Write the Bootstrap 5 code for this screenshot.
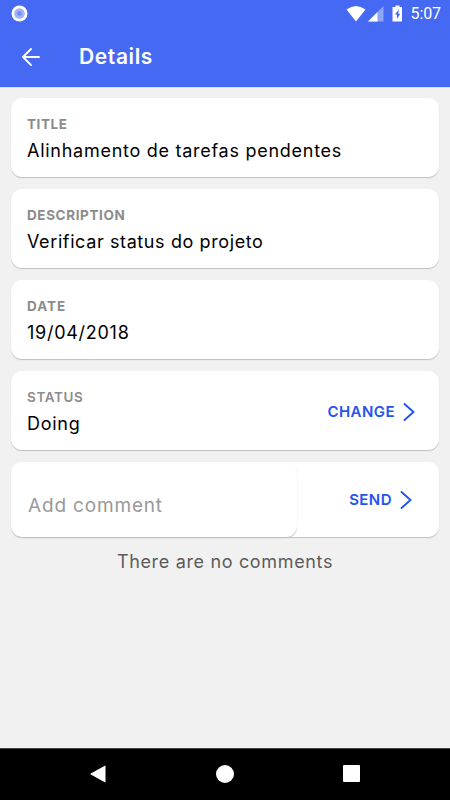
<!DOCTYPE html>
<html lang="en">
<head>
<meta charset="utf-8">
<meta name="viewport" content="width=device-width, initial-scale=1">
<title>Details</title>
<link href="https://cdn.jsdelivr.net/npm/bootstrap@5.3.0/dist/css/bootstrap.min.css" rel="stylesheet">
<style>
body{font-family:Inter,"Noto Sans",sans-serif;background:#f1f1f1;height:800px;overflow:hidden;color:#000}
svg{display:block;flex:none}
.app-header{background:#4569f2;height:87px;box-shadow:0 1px 0 #d3dbf9}
.status-row{height:27px;padding:0 9px 0 11px}
.clock{font:400 16px/27px Roboto,sans-serif;margin-left:7px;letter-spacing:-.1px}
.title-row{height:60px;padding-left:22px}
.page-title{font-size:21px;font-weight:600;line-height:28px;margin-left:39px;letter-spacing:.6px}
.content{padding:11px 11px 0}
.tile{background:#fff;border-radius:11px;height:79px;box-shadow:0 1px 1px #bfbfbf;margin-bottom:12px;padding:17px 23px 0 16px}
.caption{font-size:13.5px;font-weight:700;line-height:18px;color:#8c8c8c;letter-spacing:.6px}
.caption-date{letter-spacing:1px}
.value{font-size:18px;line-height:24px;margin-top:6px;white-space:nowrap;letter-spacing:.73px}
.value-desc{letter-spacing:.61px}
.action{font-size:15px;font-weight:600;color:#2453ee;text-decoration:none;letter-spacing:.45px;gap:8px}
.change{margin-top:13px;margin-right:1px}
.entry{height:75px;padding:0}
.entry-field{width:286px;height:75px;border-radius:11px;box-shadow:.5px 1px 1px -.5px #c4c4c4;padding:14px 0 0 17px}
.entry-input{font-size:19px;width:250px;color:#999;outline:0;letter-spacing:.83px}
.entry-input::placeholder{color:#999;opacity:1}
.send{padding:1px 27px 0 0}
.empty{font-size:18px;line-height:24px;color:#5c5c5c;margin-top:1px;padding-top:1px;letter-spacing:.66px}
.nav-keys{height:52px;background:#000;border-top:1px solid #444;padding:0 90px 2px 90px}
</style>
<script src="https://cdn.jsdelivr.net/npm/bootstrap@5.3.0/dist/js/bootstrap.bundle.min.js"></script>
</head>
<body class="d-flex flex-column">
<header class="app-header text-white flex-shrink-0">
  <div class="status-row d-flex align-items-center">
    <svg width="17" height="17" viewBox="0 0 17 17"><circle cx="8.500" cy="8.500" r="8" fill="#fff"/><circle cx="8.500" cy="8.500" r="5.300" fill="#a2b3f8"/><circle cx="8.500" cy="8.500" r="2.400" fill="#7790f4"/></svg>
    <svg class="ms-auto" width="58" height="18" viewBox="0 0 58 18"><path d="M.5 4.500Q10 -2.500 19.500 4.500L10 16.500Z" fill="#fff"/><path d="M37.500 1V16.500H22Z" fill="#8fa5f7"/><path d="M31.500 7V16.500H22Z" fill="#fff"/><path d="M49.500.5h4V2H56v14.500H46.500V2h3Z" fill="#fff"/><path d="M52.800 4.500 49 9.500H50.900V14L54.300 8.700H52.300Z" fill="#4569f2"/></svg>
    <span class="clock">5:07</span>
  </div>
  <div class="title-row d-flex align-items-center">
    <svg width="18" height="18" viewBox="0 0 18 18" fill="none" stroke="#fff" stroke-width="1.800" stroke-linecap="round" stroke-linejoin="round"><path d="M17 9H1M9 1 1 9l8 8"/></svg>
    <h1 class="page-title mb-0">Details</h1>
  </div>
</header>
<main class="content flex-grow-1">
  <section class="tile"><div class="caption">TITLE</div><div class="value">Alinhamento de tarefas pendentes</div></section>
  <section class="tile"><div class="caption">DESCRIPTION</div><div class="value value-desc">Verificar status do projeto</div></section>
  <section class="tile"><div class="caption caption-date">DATE</div><div class="value">19/04/2018</div></section>
  <section class="tile d-flex justify-content-between">
    <div><div class="caption fw-semibold">STATUS</div><div class="value">Doing</div></div>
    <a href="#" class="action change d-flex align-items-center align-self-start">CHANGE<svg width="12" height="20" viewBox="0 0 12 20" fill="none" stroke="#2453ee" stroke-width="1.900" stroke-linecap="round"><path d="m1.500 2 9 8-9 8"/></svg></a>
  </section>
  <form class="tile entry d-flex justify-content-between">
    <div class="entry-field d-flex align-items-center"><input class="entry-input border-0 p-0 bg-transparent" type="text" placeholder="Add comment" aria-label="Add comment"></div>
    <a href="#" class="action send d-flex align-items-center">SEND<svg width="12" height="20" viewBox="0 0 12 20" fill="none" stroke="#2453ee" stroke-width="1.900" stroke-linecap="round"><path d="m1.500 2 9 8-9 8"/></svg></a>
  </form>
  <p class="empty text-center mb-0">There are no comments</p>
</main>
<nav class="nav-keys d-flex align-items-center justify-content-between flex-shrink-0">
  <svg width="16" height="18" viewBox="0 0 16 18"><path d="M15.500 1v16Q15.500 17.700 14.800 17.300L.8 9.500Q0 9 .8 8.500L14.800.7Q15.500.3 15.500 1Z" fill="#fff"/></svg>
  <svg width="18" height="18" viewBox="0 0 18 18"><circle cx="9" cy="9" r="9" fill="#fff"/></svg>
  <svg width="17" height="17" viewBox="0 0 17 17"><rect width="17" height="17" rx="1" fill="#fff"/></svg>
</nav>
</body>
</html>
